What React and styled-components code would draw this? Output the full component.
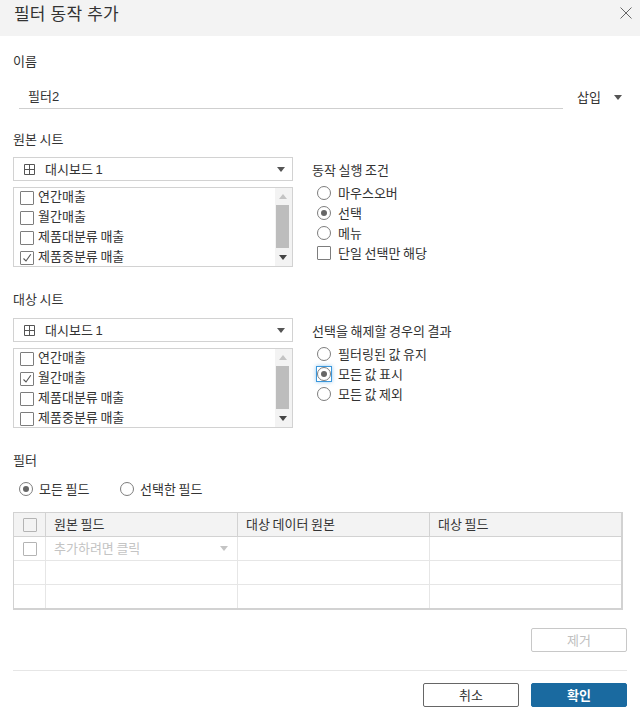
import styled, { createGlobalStyle } from "styled-components";

const GlobalStyle = createGlobalStyle`
  html, body {
    margin: 0;
    padding: 0;
    background: #fff;
  }
  * {
    box-sizing: border-box;
  }
`;

const Dialog = styled.div`
  width: 640px;
  height: 713px;
  overflow: hidden;
  background: #fff;
  color: #333;
  font-family: "Liberation Sans", "Noto Sans CJK KR", sans-serif;
  font-size: 13px;
  line-height: 16px;
  word-spacing: -1px;
`;

const Header = styled.div`
  height: 36px;
  padding: 0 8px 8px 14px;
  display: flex;
  align-items: center;
  justify-content: space-between;
  background: #f3f3f3;
  > svg {
    margin-bottom: 3px;
  }
`;

const Title = styled.div`
  padding-top: 2px;
  font-size: 17px;
  line-height: 20px;
  letter-spacing: 0.2px;
  word-spacing: 0;
`;

const Body = styled.div`
  padding: 0 13px;
`;

const Label = styled.div`
  height: 16px;
  margin-top: ${(p) => p.$top}px;
  padding-top: 1px;
`;

const NameRow = styled.div`
  margin-top: 17px;
  padding-left: 6px;
  display: flex;
  align-items: center;
`;

const NameInput = styled.div`
  width: 544px;
  height: 23px;
  padding: 3px 0 0 9px;
  border-bottom: 1px solid #cfcfcf;
`;

const InsertMenu = styled.div`
  margin-left: 14px;
  display: flex;
  align-items: center;
  gap: 13px;
`;

const Caret = styled.span`
  display: block;
  flex: none;
  width: 0;
  height: 0;
  border-left: 4px solid transparent;
  border-right: 4px solid transparent;
  border-top: 5px solid ${(p) => p.$color || "#555"};
`;

const SheetGroup = styled.div`
  margin-top: ${(p) => p.$top}px;
  display: grid;
  grid-template-columns: 280px 1fr;
  column-gap: 19px;
`;

const SheetColumn = styled.div`
  display: flex;
  flex-direction: column;
  gap: 6px;
`;

const Select = styled.div`
  height: 24px;
  padding: 0 7px 0 10px;
  display: flex;
  align-items: center;
  border: 1px solid #d2d2d2;
  > span:nth-child(2) {
    margin-left: 10px;
    padding-top: 1px;
    flex: 1;
  }
`;

const ListBox = styled.div`
  height: 80px;
  display: flex;
  justify-content: space-between;
  overflow: hidden;
  border: 1px solid #d2d2d2;
`;

const ListItems = styled.div`
  padding: 0 0 0 6px;
`;

const ListItem = styled.div`
  height: 20px;
  display: flex;
  align-items: center;
  gap: 4px;
  > span:last-child {
    padding-bottom: 2px;
  }
`;

const Scrollbar = styled.div`
  width: 17px;
  padding-right: 2px;
  display: flex;
  flex-direction: column;
  align-items: center;
  background: #f3f3f3;
`;

const ScrollArrow = styled.div`
  height: 17px;
  display: flex;
  align-items: center;
  justify-content: center;
`;

const UpCaret = styled(Caret)`
  border-top: 0;
  border-bottom: 5px solid #c4c4c4;
`;

const Thumb = styled.div`
  width: 13px;
  height: 43px;
  margin-bottom: 1px;
  background: #bdbdbd;
`;

const Options = styled.div`
  padding-top: 5px;
`;

const OptionTitle = styled.div`
  height: 16px;
  margin-bottom: 5px;
  padding-top: 1px;
`;

const OptionRow = styled.div`
  height: 20px;
  padding-left: 5px;
  display: flex;
  align-items: center;
  gap: 7px;
`;

const OptionText = styled.span`
  padding-top: 2px;
`;

const RadioCircle = styled.span`
  flex: none;
  width: 14px;
  height: 14px;
  display: flex;
  align-items: center;
  justify-content: center;
  border: 1px solid #7d7d7d;
  border-radius: 50%;
  background: #fff;
`;

const RadioDot = styled.span`
  width: 6px;
  height: 6px;
  border-radius: 50%;
  background: #666;
`;

const FocusRing = styled.span`
  flex: none;
  width: 14px;
  height: 14px;
  display: flex;
  outline: 1px solid #3a97dc;
  box-shadow: 0 0 4px 1px rgba(58, 151, 220, 0.55);
`;

const Box = styled.span`
  flex: none;
  width: 14px;
  height: 14px;
  display: flex;
  align-items: center;
  justify-content: center;
  border: 1px solid ${(p) => p.$color || "#7d7d7d"};
  border-radius: 1px;
  background: ${(p) => p.$bg || "#fff"};
`;

const FilterRadios = styled.div`
  margin-top: 11px;
  height: 20px;
  padding-left: 6px;
  display: flex;
  align-items: center;
`;

const FilterRadio = styled.div`
  width: 101px;
  display: flex;
  align-items: center;
  gap: 6px;
`;

const Table = styled.div`
  width: 610px;
  margin-top: 13px;
  border: 1px solid #d2d2d2;
  border-right-width: 2px;
  border-bottom-width: 2px;
`;

const TableRow = styled.div`
  display: grid;
  grid-template-columns: 32px 192px 192px 1fr;
  height: 24px;
  background: ${(p) => (p.$head ? "#f3f3f3" : "#fff")};
  border-bottom: 1px solid ${(p) => (p.$head ? "#d2d2d2" : "#e6e6e6")};
  &:last-child {
    height: 23px;
    border-bottom: 0;
  }
`;

const Cell = styled.div`
  padding: 0 9px 0 8px;
  display: flex;
  align-items: center;
  justify-content: space-between;
  color: ${(p) => (p.$muted ? "#c4c4c4" : "inherit")};
  border-right: 1px solid ${(p) => (p.$head ? "#d2d2d2" : "#e6e6e6")};
  &:last-child {
    border-right: 0;
  }
`;

const CheckCell = styled(Cell)`
  padding: 0;
  justify-content: center;
`;

const RemoveRow = styled.div`
  margin-top: 18px;
  display: flex;
  justify-content: flex-end;
`;

const Button = styled.button`
  width: 96px;
  height: 24px;
  padding: 1px 0 0;
  font: inherit;
  border-radius: 2px;
  border: 1px solid ${(p) => (p.$primary ? "#1a6aa0" : p.disabled ? "#c8c8c8" : "#666")};
  background: ${(p) => (p.$primary ? "#1a6aa0" : "#fff")};
  color: ${(p) => (p.$primary ? "#fff" : p.disabled ? "#c0c0c0" : "#333")};
  font-weight: ${(p) => (p.$primary ? 700 : 400)};
`;

const Divider = styled.div`
  margin-top: 18px;
  height: 1px;
  background: #e6e6e6;
`;

const Footer = styled.div`
  margin-top: 12px;
  display: flex;
  justify-content: flex-end;
  gap: 12px;
`;

function CloseIcon() {
  return (
    <svg width="12" height="12" viewBox="0 0 12 12" fill="none" stroke="#666" strokeWidth="1">
      <path d="M0.5 0.5 L11.5 11.5 M11.5 0.5 L0.5 11.5" />
    </svg>
  );
}

function SheetIcon() {
  return (
    <svg width="11" height="11" viewBox="0 0 11 11" fill="none" stroke="#555" strokeWidth="1">
      <path d="M0.5 0.5 H10.5 V10.5 H0.5 Z M5.5 0.5 V10.5 M0.5 5.5 H10.5" />
    </svg>
  );
}

function CheckMark() {
  return (
    <svg width="10" height="10" viewBox="0 0 10 10" fill="none" stroke="#555" strokeWidth="1.1">
      <path d="M1.5 5.5 L4 8 L8.8 1.2" />
    </svg>
  );
}

function Radio({ checked }) {
  return <RadioCircle>{checked && <RadioDot />}</RadioCircle>;
}

function SheetPicker({ checkedIndex }) {
  const sheets = ["연간매출", "월간매출", "제품대분류 매출", "제품중분류 매출"];
  return (
    <SheetColumn>
      <Select>
        <SheetIcon />
        <span>대시보드 1</span>
        <Caret />
      </Select>
      <ListBox>
        <ListItems>
          {sheets.map((name, index) => (
            <ListItem key={name}>
              <Box>{index === checkedIndex && <CheckMark />}</Box>
              <span>{name}</span>
            </ListItem>
          ))}
        </ListItems>
        <Scrollbar>
          <ScrollArrow>
            <UpCaret />
          </ScrollArrow>
          <Thumb />
          <ScrollArrow>
            <Caret $color="#444" />
          </ScrollArrow>
        </Scrollbar>
      </ListBox>
    </SheetColumn>
  );
}

export default function App() {
  return (
    <Dialog>
      <GlobalStyle />
      <Header>
        <Title>필터 동작 추가</Title>
        <CloseIcon />
      </Header>
      <Body>
        <Label $top={17}>이름</Label>
        <NameRow>
          <NameInput>필터2</NameInput>
          <InsertMenu>
            삽입
            <Caret />
          </InsertMenu>
        </NameRow>

        <Label $top={22}>원본 시트</Label>
        <SheetGroup $top={10}>
          <SheetPicker checkedIndex={3} />
          <Options>
            <OptionTitle>동작 실행 조건</OptionTitle>
            <OptionRow>
              <Radio />
              <OptionText>마우스오버</OptionText>
            </OptionRow>
            <OptionRow>
              <Radio checked />
              <OptionText>선택</OptionText>
            </OptionRow>
            <OptionRow>
              <Radio />
              <OptionText>메뉴</OptionText>
            </OptionRow>
            <OptionRow>
              <Box />
              <OptionText>단일 선택만 해당</OptionText>
            </OptionRow>
          </Options>
        </SheetGroup>

        <Label $top={24}>대상 시트</Label>
        <SheetGroup $top={11}>
          <SheetPicker checkedIndex={1} />
          <Options>
            <OptionTitle>선택을 해제할 경우의 결과</OptionTitle>
            <OptionRow>
              <Radio />
              <OptionText>필터링된 값 유지</OptionText>
            </OptionRow>
            <OptionRow>
              <FocusRing>
                <Radio checked />
              </FocusRing>
              <OptionText>모든 값 표시</OptionText>
            </OptionRow>
            <OptionRow>
              <Radio />
              <OptionText>모든 값 제외</OptionText>
            </OptionRow>
          </Options>
        </SheetGroup>

        <Label $top={24}>필터</Label>
        <FilterRadios>
          <FilterRadio>
            <Radio checked />
            <OptionText>모든 필드</OptionText>
          </FilterRadio>
          <FilterRadio>
            <Radio />
            <OptionText>선택한 필드</OptionText>
          </FilterRadio>
        </FilterRadios>

        <Table>
          <TableRow $head>
            <CheckCell $head>
              <Box $color="#b4b4b4" $bg="#f3f3f3" />
            </CheckCell>
            <Cell $head>원본 필드</Cell>
            <Cell $head>대상 데이터 원본</Cell>
            <Cell $head>대상 필드</Cell>
          </TableRow>
          <TableRow>
            <CheckCell>
              <Box $color="#b4b4b4" />
            </CheckCell>
            <Cell $muted>
              추가하려면 클릭
              <Caret $color="#c4c4c4" />
            </Cell>
            <Cell />
            <Cell />
          </TableRow>
          <TableRow>
            <Cell />
            <Cell />
            <Cell />
            <Cell />
          </TableRow>
          <TableRow>
            <Cell />
            <Cell />
            <Cell />
            <Cell />
          </TableRow>
        </Table>

        <RemoveRow>
          <Button disabled>제거</Button>
        </RemoveRow>
        <Divider />
        <Footer>
          <Button>취소</Button>
          <Button $primary>확인</Button>
        </Footer>
      </Body>
    </Dialog>
  );
}
